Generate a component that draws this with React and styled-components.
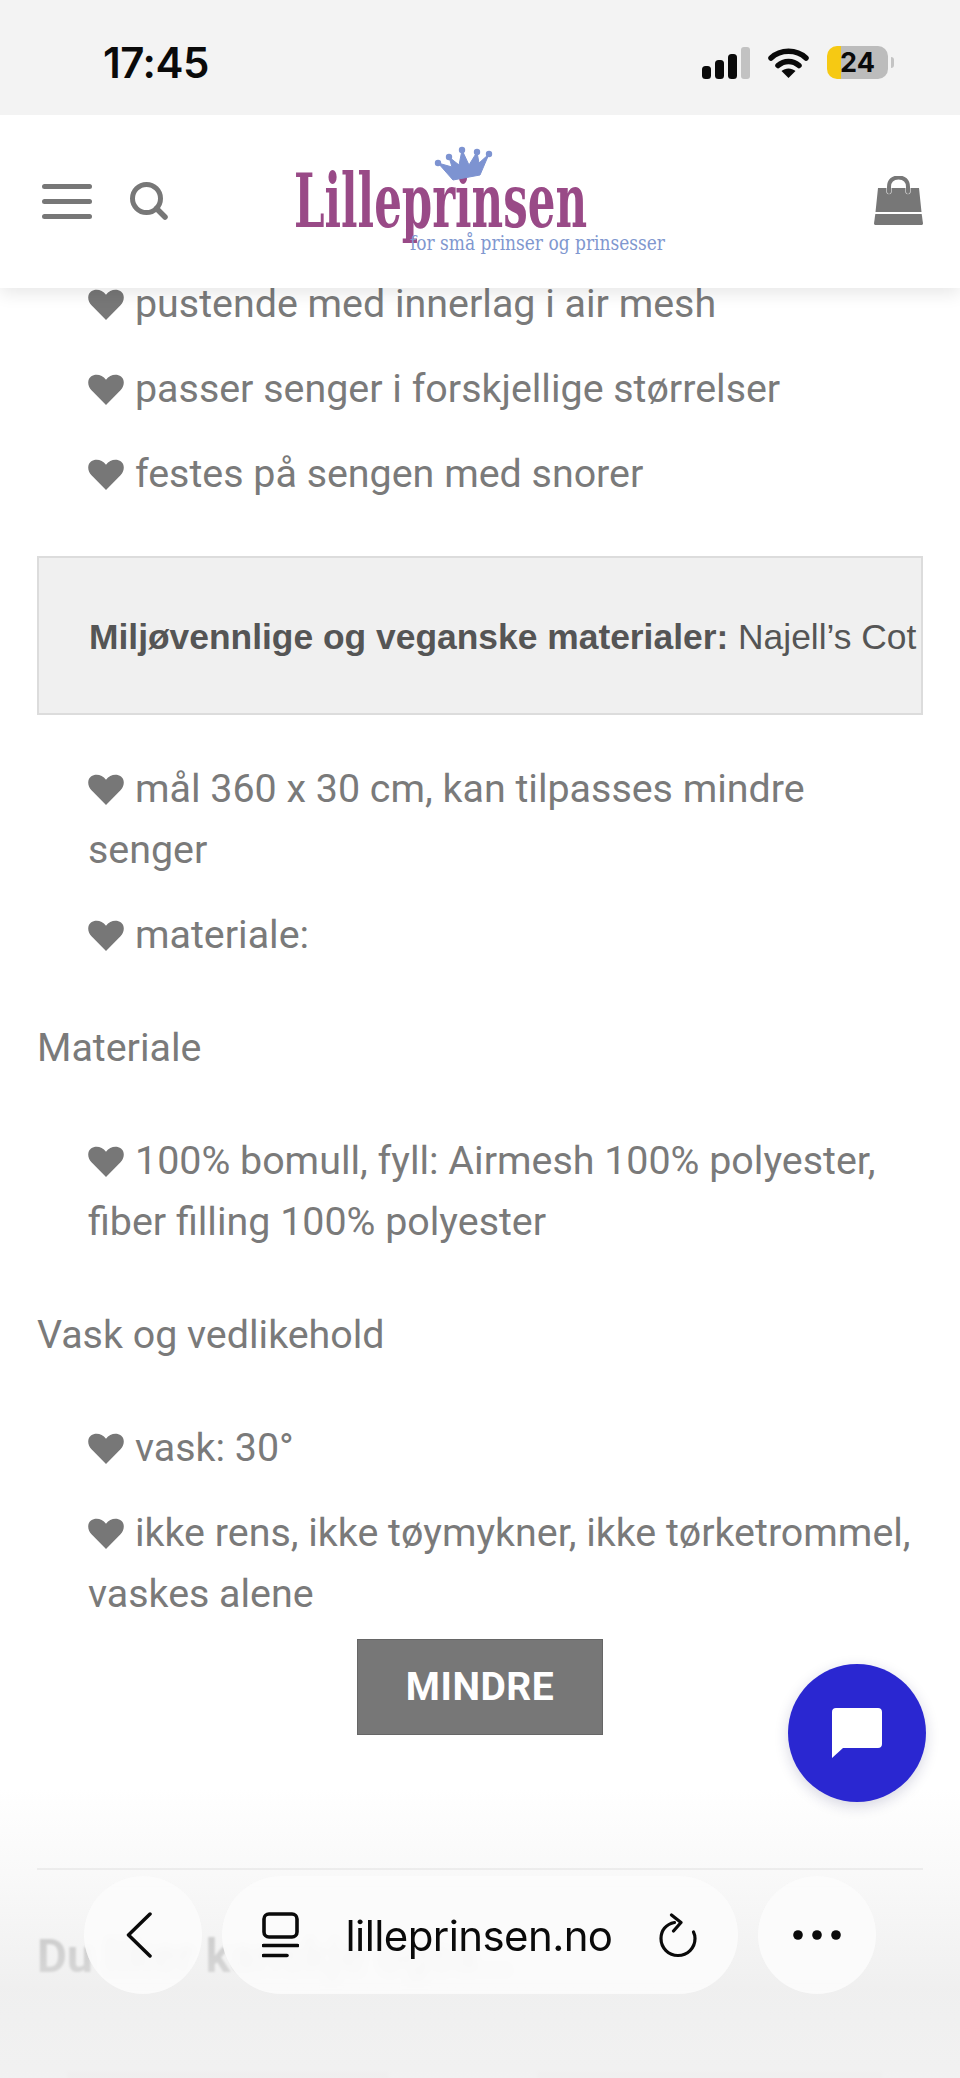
import React from 'react';
import styled, { createGlobalStyle } from 'styled-components';

const GlobalStyle = createGlobalStyle`
  html, body {
    margin: 0;
    padding: 0;
    background: #fff;
  }
`;

const Page = styled.div`
  position: relative;
  width: 960px;
  height: 2078px;
  overflow: hidden;
  background: #fff;
  font-family: Roboto, sans-serif;
  color: #7a7a7a;
`;

const StatusBar = styled.div`
  position: relative;
  z-index: 3;
  height: 115px;
  box-sizing: border-box;
  padding: 10px 72px 0 103px;
  background: #f3f3f3;
  display: flex;
  align-items: center;
  justify-content: space-between;
`;

const Clock = styled.div`
  font-family: Inter, sans-serif;
  font-size: 42px;
  font-weight: 600;
  letter-spacing: -0.5px;
  color: #0a0a0a;
`;

const StatusIcons = styled.div`
  display: flex;
  align-items: center;
  gap: 18px;
`;

const Battery = styled.div`
  position: relative;
  width: 61px;
  height: 33px;
  border-radius: 10px;
  overflow: hidden;
  background: linear-gradient(90deg, #f6c913 0 14px, #bcbcbc 14px);
  font-family: Inter, sans-serif;
  font-size: 27px;
  font-weight: 700;
  line-height: 33px;
  text-align: center;
  color: #0a0a0a;
`;

const BatteryWrap = styled.div`
  display: flex;
  align-items: center;
  gap: 3px;
  margin-right: -6px;
`;

const BatteryNub = styled.div`
  width: 3px;
  height: 11px;
  border-radius: 0 3px 3px 0;
  background: #c4c4c4;
`;

const Header = styled.header`
  position: relative;
  z-index: 2;
  height: 173px;
  box-sizing: border-box;
  padding: 0 37px 0 42px;
  display: flex;
  align-items: center;
  background: #fff;
  box-shadow: 0 6px 16px rgba(0, 0, 0, 0.09);
`;

const HeaderLeft = styled.div`
  display: flex;
  align-items: center;
  gap: 38px;
`;

const LogoBox = styled.div`
  display: flex;
  margin-left: 116px;
  margin-top: -2px;
`;

const CartBox = styled.div`
  display: flex;
  margin-left: auto;
  margin-top: -2px;
`;

const Content = styled.main`
  margin-top: -15px;
  padding: 0 37px;
`;

const List = styled.ul`
  list-style: none;
  margin: 0;
  padding: 0;
`;

const Item = styled.li`
  margin: 0 0 24px;
  padding-left: 51px;
  padding-right: 6px;
  font-size: 39.4px;
  line-height: 61px;

  &:last-child {
    margin-bottom: 0;
  }
`;

const Heart = styled.svg`
  width: 36px;
  height: 31px;
  margin-right: 11px;
  vertical-align: -3px;
  fill: #777;
`;

const Notice = styled.div`
  margin: 52px 0 43px;
  height: 159px;
  box-sizing: border-box;
  padding: 4px 5px 0 50px;
  border: 2px solid #dcdcdc;
  background: #f0f0f0;
  display: flex;
  align-items: center;
`;

const NoticeText = styled.div`
  white-space: nowrap;
  font-family: "Liberation Sans", Arial, sans-serif;
  font-size: 35.4px;
  color: #555;

  strong {
    font-weight: 700;
  }
`;

const SectionLabel = styled.p`
  margin: 52px 0;
  font-size: 39.4px;
  line-height: 61px;
`;

const ButtonRow = styled.div`
  margin-top: 15px;
  display: flex;
  justify-content: center;
`;

const LessButton = styled.button`
  width: 246px;
  height: 96px;
  padding: 0;
  border: 1px solid #666;
  border-radius: 0;
  background: #777;
  color: #fff;
  font-family: Roboto, sans-serif;
  font-size: 39px;
  font-weight: 700;
  letter-spacing: 0.5px;
`;

const Divider = styled.hr`
  margin: 133px 0 0;
  border: 0;
  border-top: 2px solid #e6e6e6;
`;

const RelatedTitle = styled.h2`
  margin: 56px 0 0;
  font-family: Roboto, sans-serif;
  font-size: 46px;
  line-height: 60px;
  font-weight: 700;
  color: #858585;
  filter: blur(1.2px);
`;

const RelatedRow = styled.div`
  margin-top: 86px;
  padding-left: 30px;
  display: grid;
  grid-template-columns: 322px 345px;
  gap: 148px;
`;

const RelatedThumb = styled.div`
  height: 30px;
  background: ${(p) => p.$tint};
  filter: blur(1.5px);
`;

const BottomFade = styled.div`
  position: absolute;
  left: 0;
  right: 0;
  bottom: 0;
  height: 290px;
  background: linear-gradient(
    180deg,
    rgba(243, 243, 243, 0) 0%,
    rgba(243, 243, 243, 0.55) 32%,
    rgba(236, 236, 236, 0.82) 70%,
    rgba(240, 240, 240, 0.92) 100%
  );
`;

const BottomBar = styled.nav`
  position: absolute;
  left: 84px;
  top: 1876px;
  display: flex;
  gap: 20px;
`;

const RoundPill = styled.div`
  width: 118px;
  height: 118px;
  border-radius: 50%;
  background: rgba(252, 252, 252, 0.88);
  backdrop-filter: blur(4px);
  display: flex;
  align-items: center;
  justify-content: center;
`;

const BackGlyph = styled.svg`
  margin-right: 8px;
`;

const UrlPill = styled.div`
  width: 516px;
  height: 118px;
  box-sizing: border-box;
  padding: 0 41px 0 40px;
  border-radius: 59px;
  background: rgba(252, 252, 252, 0.88);
  backdrop-filter: blur(4px);
  display: flex;
  align-items: center;
  justify-content: space-between;
`;

const UrlText = styled.span`
  font-family: Inter, sans-serif;
  font-size: 42px;
  font-weight: 400;
  letter-spacing: -0.6px;
  color: #0a0a0a;
`;

const ChatButton = styled.div`
  position: absolute;
  left: 788px;
  top: 1664px;
  width: 138px;
  height: 138px;
  border-radius: 50%;
  background: #2a27d1;
  box-shadow: 0 4px 14px rgba(30, 30, 90, 0.18);
  display: flex;
  align-items: center;
  justify-content: center;
`;

const HeartIcon = () => (
  <Heart viewBox="0 0 36 30" preserveAspectRatio="none">
    <path d="M18 30 L3.5 15.8 C-1 11 -.6 5 3 2.4 C7 -.6 14 0 18 5.6 C22 0 29 -.6 33 2.4 C36.6 5 37 11 32.5 15.8 Z" />
  </Heart>
);

const Line = ({ children }) => (
  <Item>
    <HeartIcon />
    {children}
  </Item>
);

const App = () => {
  return (
    <Page>
      <GlobalStyle />
      <StatusBar>
        <Clock>17:45</Clock>
        <StatusIcons>
          <svg width="48" height="32" viewBox="0 0 48 32">
            <rect x="0" y="19" width="9" height="13" rx="3.5" fill="#0a0a0a" />
            <rect x="13" y="13" width="9" height="19" rx="3.5" fill="#0a0a0a" />
            <rect x="26" y="7" width="9" height="25" rx="3.5" fill="#0a0a0a" />
            <rect x="39" y="0" width="9" height="32" rx="3" fill="#c2c2c2" />
          </svg>
          <svg width="41" height="31" viewBox="0 0 41 31">
            <path d="M3 11 C12.5 2 28.5 2 38 11" fill="none" stroke="#0a0a0a" strokeWidth="5.5" strokeLinecap="round" />
            <path d="M10 18.5 C16 13 25 13 31 18.5" fill="none" stroke="#0a0a0a" strokeWidth="5.5" strokeLinecap="round" />
            <path d="M20.5 31 L13.5 24 C17.5 20.5 23.5 20.5 27.5 24 Z" fill="#0a0a0a" />
          </svg>
          <BatteryWrap>
            <Battery>24</Battery>
            <BatteryNub />
          </BatteryWrap>
        </StatusIcons>
      </StatusBar>

      <Header>
        <HeaderLeft>
          <svg width="50" height="35" viewBox="0 0 50 35">
            <g stroke="#777" strokeWidth="5" strokeLinecap="round">
              <line x1="2.5" y1="2.5" x2="47.5" y2="2.5" />
              <line x1="2.5" y1="17.5" x2="47.5" y2="17.5" />
              <line x1="2.5" y1="32.5" x2="47.5" y2="32.5" />
            </g>
          </svg>
          <svg width="40" height="40" viewBox="0 0 40 40">
            <circle cx="16.5" cy="16.5" r="14" fill="none" stroke="#777" strokeWidth="5" />
            <line x1="26.5" y1="26.5" x2="35" y2="35" stroke="#777" strokeWidth="5.5" strokeLinecap="round" />
          </svg>
        </HeaderLeft>
        <LogoBox>
          <svg width="560" height="125" viewBox="0 0 560 125">
            <text
              x="8"
              y="89"
              fontFamily="'DejaVu Serif', serif"
              fontWeight="700"
              fontSize="74"
              textLength="293"
              lengthAdjust="spacingAndGlyphs"
              fill="#994a87"
            >
              Lilleprinsen
            </text>
            <text
              x="124"
              y="112"
              fontFamily="'DejaVu Serif', serif"
              fontSize="20"
              textLength="255"
              lengthAdjust="spacingAndGlyphs"
              fill="#8097cf"
            >
              for små prinser og prinsesser
            </text>
            <path
              d="M152 25 L166 29 L163 19 L173 27 L176 12 L183 27 L191 14 L193 25 L203 16 L194 37 L167 42 Z"
              fill="#7d93d1"
              stroke="#7d93d1"
              strokeWidth="1"
              strokeLinejoin="round"
            />
            <g fill="#7d93d1">
              <circle cx="152" cy="25" r="3.2" />
              <circle cx="163" cy="19" r="3.2" />
              <circle cx="176" cy="12" r="3.2" />
              <circle cx="191" cy="14" r="3.2" />
              <circle cx="203" cy="16" r="3.2" />
            </g>
          </svg>
        </LogoBox>
        <CartBox>
          <svg width="49" height="49" viewBox="0 0 49 49">
            <path d="M15 16 V11 C15 4.5 19 1.5 24.5 1.5 C30 1.5 34 4.5 34 11 V16" fill="none" stroke="#777" strokeWidth="4" strokeLinecap="round" />
            <path d="M4 12 H12.5 V16 C12.5 19 17.5 19 17.5 16 V12 H31.5 V16 C31.5 19 36.5 19 36.5 16 V12 H45 L47.5 36 H1.5 Z" fill="#777" />
            <path d="M1.3 38 H47.7 L49 47.5 C49 48.5 48 49 47 49 H2 C1 49 0 48.5 0 47.5 Z" fill="#777" />
          </svg>
        </CartBox>
      </Header>

      <Content>
        <List>
          <Line>pustende med innerlag i air mesh</Line>
          <Line>passer senger i forskjellige størrelser</Line>
          <Line>festes på sengen med snorer</Line>
        </List>

        <Notice>
          <NoticeText>
            <strong>Miljøvennlige og veganske materialer:</strong> Najell’s Cot
          </NoticeText>
        </Notice>

        <List>
          <Line>mål 360 x 30 cm, kan tilpasses mindre senger</Line>
          <Line>materiale:</Line>
        </List>

        <SectionLabel>Materiale</SectionLabel>

        <List>
          <Line>100% bomull, fyll: Airmesh 100% polyester, fiber filling 100% polyester</Line>
        </List>

        <SectionLabel>Vask og vedlikehold</SectionLabel>

        <List>
          <Line>vask: 30°</Line>
          <Line>ikke rens, ikke tøymykner, ikke tørketrommel, vaskes alene</Line>
        </List>

        <ButtonRow>
          <LessButton>MINDRE</LessButton>
        </ButtonRow>

        <Divider />
        <RelatedTitle>Du liker kanskje også…</RelatedTitle>
        <RelatedRow>
          <RelatedThumb $tint="#e9e2de" />
          <RelatedThumb $tint="#ebe7e4" />
        </RelatedRow>
      </Content>

      <BottomFade />

      <ChatButton>
        <svg width="50" height="50" viewBox="0 0 50 50">
          <path d="M4 0 H46 C48.5 0 50 1.5 50 4 V36 C50 38.5 48.5 40 46 40 H11 L0 50 V4 C0 1.5 1.5 0 4 0 Z" fill="#fff" />
        </svg>
      </ChatButton>

      <BottomBar>
        <RoundPill>
          <BackGlyph width="26" height="46" viewBox="0 0 26 46">
            <path d="M24 2 L2.5 23 L24 44" fill="none" stroke="#0a0a0a" strokeWidth="3.5" strokeLinecap="round" strokeLinejoin="round" />
          </BackGlyph>
        </RoundPill>
        <UrlPill>
          <svg width="37" height="46" viewBox="0 0 37 46">
            <rect x="2" y="2" width="33" height="23" rx="5" fill="none" stroke="#0a0a0a" strokeWidth="3.6" />
            <line x1="1.5" y1="33.5" x2="35.5" y2="33.5" stroke="#0a0a0a" strokeWidth="3.6" strokeLinecap="round" />
            <line x1="1.5" y1="43.5" x2="25" y2="43.5" stroke="#0a0a0a" strokeWidth="3.6" strokeLinecap="round" />
          </svg>
          <UrlText>lilleprinsen.no</UrlText>
          <svg width="38" height="45" viewBox="0 0 38 45">
            <path d="M15.5 9.5 C7 11 2 17.5 2 25.5 C2 35 9.5 42.5 19 42.5 C28.5 42.5 36 35 36 25.5 C36 23 35.5 21 34.5 19" fill="none" stroke="#0a0a0a" strokeWidth="3.2" strokeLinecap="round" />
            <path d="M12.5 2 L22 9.5 L14.5 18" fill="none" stroke="#0a0a0a" strokeWidth="3.2" strokeLinecap="round" strokeLinejoin="round" />
          </svg>
        </UrlPill>
        <RoundPill>
          <svg width="48" height="10" viewBox="0 0 48 10">
            <circle cx="5" cy="5" r="4.8" fill="#0a0a0a" />
            <circle cx="24" cy="5" r="4.8" fill="#0a0a0a" />
            <circle cx="43" cy="5" r="4.8" fill="#0a0a0a" />
          </svg>
        </RoundPill>
      </BottomBar>
    </Page>
  );
};

export default App;
